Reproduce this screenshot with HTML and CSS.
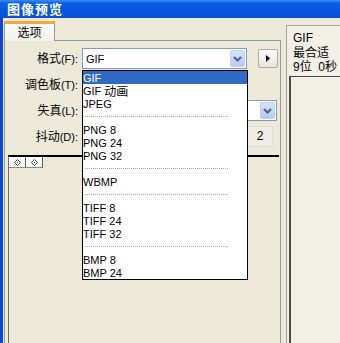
FILE: index.html
```html
<!DOCTYPE html>
<html>
<head>
    <link rel="stylesheet" href="styles.css">
</head>
<body>
    <div class="window">
        <div class="titlebar">图像预览</div>
        <div class="client">
            <div class="options">
                <div class="tabs">
                    <div class="tab">选项</div>
                </div>
                <div class="panel">
                    <div class="form">
                        <label><span class="cjk">格式</span>(F):</label>
                        <div class="row">
                            <div class="combo fmt">
                                <span class="val">GIF</span>
                                <span class="drop">
                                    <svg width="9" height="6" viewBox="0 0 9 6"><path d="M1 1l3.5 3.5L8 1" fill="none" stroke="#4d6185" stroke-width="2"/></svg>
                                </span>
                            </div>
                            <button class="more">
                                <svg width="4" height="7" viewBox="0 0 4 7"><path d="M0 0l4 3.5L0 7z" fill="#000"/></svg>
                            </button>
                        </div>
                        <label><span class="cjk">调色板</span>(T):</label>
                        <div class="row">
                            <div class="combo pal"></div>
                        </div>
                        <label><span class="cjk">失真</span>(L):</label>
                        <div class="row">
                            <div class="combo dist">
                                <span class="val"></span>
                                <span class="drop">
                                    <svg width="9" height="6" viewBox="0 0 9 6"><path d="M1 1l3.5 3.5L8 1" fill="none" stroke="#4d6185" stroke-width="2"/></svg>
                                </span>
                            </div>
                        </div>
                        <label><span class="cjk">抖动</span>(D):</label>
                        <div class="row">
                            <div class="spin">2</div>
                        </div>
                    </div>

                    <div class="preview">
                        <div class="zoom-btns">
                            <span><svg width="7" height="7" viewBox="0 0 7 7"><path d="M3.5 0.5L6.5 3.5 3.5 6.5 0.5 3.5z" fill="none" stroke="#444"/><rect x="3" y="3" width="1" height="1" fill="#444"/></svg></span>
                            <span><svg width="7" height="7" viewBox="0 0 7 7"><path d="M3.5 0.5L6.5 3.5 3.5 6.5 0.5 3.5z" fill="none" stroke="#444"/><rect x="3" y="3" width="1" height="1" fill="#444"/></svg></span>
                        </div>
                    </div>

                    <ul class="dropdown">
                        <li class="sel">GIF</li>
                        <li>GIF <span class="cjk">动画</span></li>
                        <li>JPEG</li>
                        <li class="sep"><hr></li>
                        <li>PNG 8</li>
                        <li>PNG 24</li>
                        <li>PNG 32</li>
                        <li class="sep"><hr></li>
                        <li>WBMP</li>
                        <li class="sep"><hr></li>
                        <li>TIFF 8</li>
                        <li>TIFF 24</li>
                        <li>TIFF 32</li>
                        <li class="sep"><hr></li>
                        <li>BMP 8</li>
                        <li>BMP 24</li>
                    </ul>
                </div>
            </div>

            <div class="info">
                <div class="meta">
                    <div>GIF</div>
                    <div class="cjk">最合适</div>
                    <div>9<span class="cjk">位</span>&nbsp; 0<span class="cjk">秒</span></div>
                </div>
                <div class="canvas"></div>
            </div>
        </div>
    </div>
</body>
</html>
```

FILE: styles.css
```css
body {
    margin: 0;
    width: 340px;
    height: 343px;
    overflow: hidden;
    background: #ece9d8;
    font-family: "Liberation Sans", "Noto Sans CJK SC", sans-serif;
    font-size: 11px;
    color: #000;
}

.cjk {
    font-family: "Noto Sans CJK SC", sans-serif;
    font-size: 12px;
}

.window {
    display: flex;
    flex-direction: column;
    height: 343px;
}

.titlebar {
    flex: none;
    height: 18px;
    line-height: 17px;
    padding-left: 7px;
    background: linear-gradient(to bottom, #3d8df6 0%, #0a5fe4 18%, #0656de 60%, #0a4fd6 100%);
    color: #fff;
    font-family: "Noto Sans CJK SC", sans-serif;
    font-weight: bold;
    font-size: 13px;
    letter-spacing: 1px;
}

.client {
    flex: 1;
    min-height: 0;
    display: flex;
    border-left: 3px solid #0b45db;
    background: #ece9d8;
}

/* Options tab */
.options {
    width: 277px;
    margin-left: 1px;
    padding-top: 3px;
    display: flex;
    flex-direction: column;
}

.tabs {
    display: flex;
}

.tab {
    width: 51px;
    height: 20px;
    box-sizing: border-box;
    margin-bottom: -1px;
    border: 1px solid #919b9c;
    border-top: 3px solid #f3a83c;
    border-bottom: none;
    background: linear-gradient(to bottom, #fdfdfb, #f2f0e8);
    text-align: center;
    font-family: "Noto Sans CJK SC", sans-serif;
    font-size: 12px;
    line-height: 15px;
    position: relative;
    z-index: 1;
}

.panel {
    flex: 1;
    position: relative;
    display: flex;
    flex-direction: column;
    padding-top: 7px;
    border: 1px solid #919b9c;
    border-bottom: none;
    background: #ece9d8;
}

.form {
    display: grid;
    grid-template-columns: 73px auto;
    grid-auto-rows: 21px;
    column-gap: 4px;
    row-gap: 5px;
    align-items: center;
}

.form label {
    text-align: right;
    white-space: nowrap;
    font-size: 11px;
    line-height: 16px;
}

.row {
    display: flex;
    align-items: center;
    height: 21px;
}

.combo {
    height: 21px;
    box-sizing: border-box;
    padding: 1px;
    border: 1px solid #7f9db9;
    background: #fff;
    display: flex;
    align-items: center;
    justify-content: space-between;
}

.combo.fmt,
.combo.pal {
    width: 165px;
}

.combo.dist {
    width: 195px;
}

.combo .val {
    padding-left: 2px;
}

.drop {
    width: 15px;
    height: 17px;
    box-sizing: border-box;
    border: 1px solid #bdd0f8;
    border-radius: 2px;
    background: linear-gradient(to bottom, #d6e2fc, #b4caf6);
    display: flex;
    align-items: center;
    justify-content: center;
}

.more {
    margin-left: 11px;
    width: 20px;
    height: 19px;
    padding: 0;
    border: 1px solid #aeab9e;
    border-radius: 2px;
    background: linear-gradient(to bottom, #fefefc, #e6e4d8);
    display: flex;
    align-items: center;
    justify-content: center;
}

.spin {
    margin-left: 165px;
    width: 26px;
    height: 21px;
    box-sizing: border-box;
    border: 1px solid #e0ddcf;
    background: #efede3;
    text-align: center;
    font-size: 12px;
    line-height: 19px;
}

/* Preview area */
.preview {
    flex: 1;
    margin: 8px 1px 0 3px;
    border-top: 2px solid #000;
    border-left: 1px solid #6f6d62;
}

.zoom-btns {
    display: flex;
}

.zoom-btns span {
    width: 16px;
    height: 10px;
    border-right: 1px solid #555;
    border-bottom: 1px solid #8a8a8a;
    background: #fff;
    display: flex;
    align-items: center;
    justify-content: center;
}

/* Open format list */
.dropdown {
    position: absolute;
    left: 77px;
    top: 29px;
    z-index: 5;
    width: 166px;
    box-sizing: border-box;
    margin: 0;
    padding: 0;
    list-style: none;
    border: 1px solid #000;
    background: #fff;
}

.dropdown li {
    display: flex;
    align-items: center;
    height: 13px;
    white-space: nowrap;
}

.dropdown li .cjk {
    margin-left: 3px;
    line-height: 13px;
}

.dropdown li.sel {
    background: #316ac5;
    color: #fff;
}

.dropdown li.sep {
    padding: 0 19px 0 2px;
}

.dropdown li.sep hr {
    flex: 1;
    margin: 0;
    border: 0;
    border-top: 1px dotted #a5a5a5;
}

/* Info column */
.info {
    flex: 1;
    margin: 7px 0 0 5px;
    display: flex;
    flex-direction: column;
    border-left: 1px solid #a7a69a;
    border-top: 1px solid #a7a69a;
    background: #f2f0e6;
    font-size: 12px;
}

.meta {
    padding: 5px 0 0 6px;
    line-height: 14px;
    white-space: nowrap;
}

.canvas {
    flex: 1;
    margin: 2px 0 0 2px;
    border-left: 2px solid #4a4a40;
    border-top: 1px solid #4a4a40;
}
```
